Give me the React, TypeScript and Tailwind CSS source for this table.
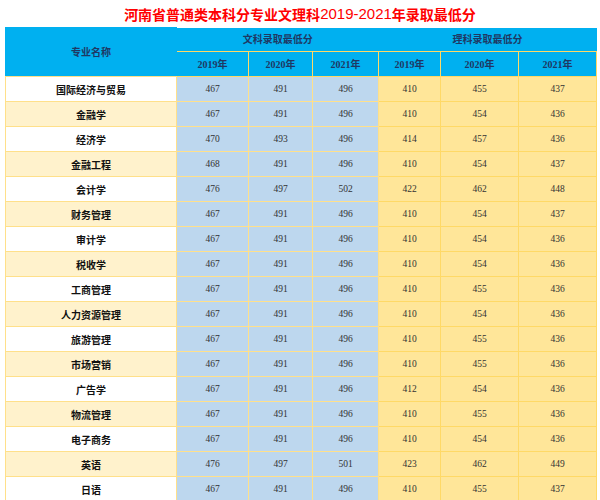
import React from "react";

type Row = { name: string; wen: number[]; li: number[] };

const rows: Row[] = [
  { name: "国际经济与贸易", wen: [467, 491, 496], li: [410, 455, 437] },
  { name: "金融学", wen: [467, 491, 496], li: [410, 454, 436] },
  { name: "经济学", wen: [470, 493, 496], li: [414, 457, 436] },
  { name: "金融工程", wen: [468, 491, 496], li: [410, 454, 437] },
  { name: "会计学", wen: [476, 497, 502], li: [422, 462, 448] },
  { name: "财务管理", wen: [467, 491, 496], li: [410, 454, 437] },
  { name: "审计学", wen: [467, 491, 496], li: [410, 454, 436] },
  { name: "税收学", wen: [467, 491, 496], li: [410, 454, 436] },
  { name: "工商管理", wen: [467, 491, 496], li: [410, 455, 436] },
  { name: "人力资源管理", wen: [467, 491, 496], li: [410, 454, 436] },
  { name: "旅游管理", wen: [467, 491, 496], li: [410, 455, 436] },
  { name: "市场营销", wen: [467, 491, 496], li: [410, 455, 436] },
  { name: "广告学", wen: [467, 491, 496], li: [412, 454, 436] },
  { name: "物流管理", wen: [467, 491, 496], li: [410, 455, 436] },
  { name: "电子商务", wen: [467, 491, 496], li: [410, 454, 436] },
  { name: "英语", wen: [476, 497, 501], li: [423, 462, 449] },
  { name: "日语", wen: [467, 491, 496], li: [410, 455, 437] },
];

const years = ["2019年", "2020年", "2021年"];
const serif = "font-['Liberation_Serif','Noto_Sans_CJK_SC',serif]";

const App = () => {
  return (
    <div className="w-[600px] h-[500px] bg-white overflow-hidden">
      <h1 className="h-[27px] flex items-center justify-center text-[14px] font-bold text-[#ff0000] font-['Noto_Sans_CJK_SC',sans-serif] leading-none">
        河南省普通类本科分专业文理科
        <span className="font-['Liberation_Sans',sans-serif] font-normal text-[15px]">2019-2021</span>
        年录取最低分
      </h1>
      <table className="ml-[5px] border-collapse table-fixed w-[591px] text-[9.5px] text-[#333]">
        <colgroup>
          <col className="w-[171px]" />
          <col className="w-[72px]" />
          <col className="w-[64px]" />
          <col className="w-[66px]" />
          <col className="w-[62px]" />
          <col className="w-[78px]" />
          <col className="w-[78px]" />
        </colgroup>
        <thead className={`bg-[#00b0f0] text-[#1f3864] text-[10px] ${serif}`}>
          <tr className="h-[24px]">
            <th rowSpan={2} className="font-semibold border border-[#00b0f0] border-b-[#ffe08a]">
              专业名称
            </th>
            <th colSpan={3} className="font-semibold border-b border-[#ffd966]">
              文科录取最低分
            </th>
            <th colSpan={3} className="font-semibold border-b border-[#ffd966]">
              理科录取最低分
            </th>
          </tr>
          <tr className="h-[25px]">
            {[...years, ...years].map((y, i) => (
              <th key={i} className="font-semibold border border-[#ffd966]">
                {y}
              </th>
            ))}
          </tr>
        </thead>
        <tbody className={serif}>
          {rows.map((r, i) => (
            <tr key={r.name} className="h-[25px]">
              <td
                className={`border border-[#ffe08a] text-center text-[10px] font-bold text-[#111] font-['Noto_Sans_CJK_SC',sans-serif] ${
                  i % 2 === 0 ? "bg-white" : "bg-[#fff2cc]"
                }`}
              >
                {r.name}
              </td>
              {r.wen.map((v, j) => (
                <td key={"w" + j} className="border border-[#ffe08a] bg-[#bdd7ee] text-center">
                  {v}
                </td>
              ))}
              {r.li.map((v, j) => (
                <td key={"l" + j} className="border border-[#ffd966] bg-[#ffe699] text-center">
                  {v}
                </td>
              ))}
            </tr>
          ))}
        </tbody>
      </table>
    </div>
  );
};

export default App;
